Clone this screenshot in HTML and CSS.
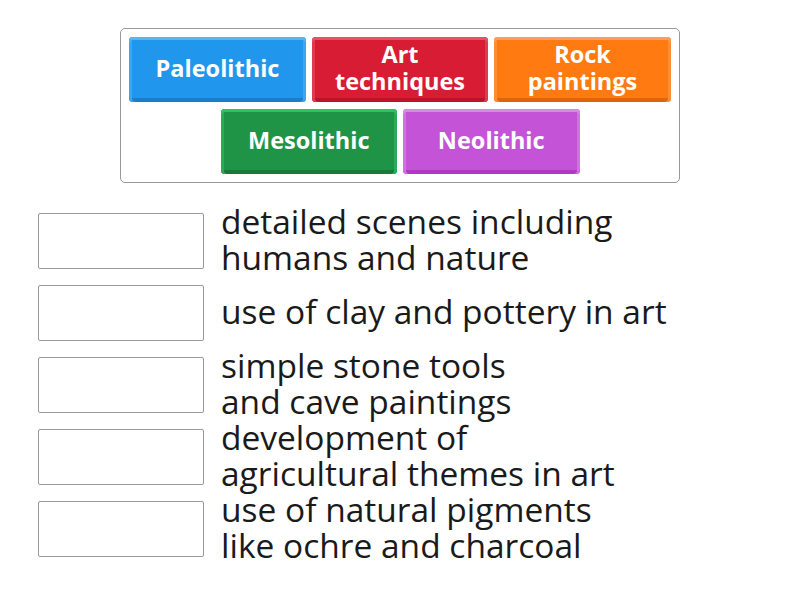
FILE: index.html
```html
<!DOCTYPE html>
<html lang="en">
<head>
  <meta charset="UTF-8" />
  <title>Match up - Prehistoric art</title>
  <link rel="stylesheet" href="styles.css">
</head>
<body>
  <!-- answer tiles -->
  <div class="bank">
    <div class="tile blue">Paleolithic</div>
    <div class="tile red">Art techniques</div>
    <div class="tile orange">Rock paintings</div>
    <div class="tile green">Mesolithic</div>
    <div class="tile purple">Neolithic</div>
  </div>

  <!-- drop targets -->
  <div class="rows">
    <div class="row">
      <div class="slot"></div>
      <div class="clue">detailed scenes including<br>humans and nature</div>
    </div>
    <div class="row">
      <div class="slot"></div>
      <div class="clue">use of clay and pottery in art</div>
    </div>
    <div class="row">
      <div class="slot"></div>
      <div class="clue">simple stone tools<br>and cave paintings</div>
    </div>
    <div class="row">
      <div class="slot"></div>
      <div class="clue">development of<br>agricultural themes in art</div>
    </div>
    <div class="row">
      <div class="slot"></div>
      <div class="clue">use of natural pigments<br>like ochre and charcoal</div>
    </div>
  </div>
</body>
</html>
```

FILE: styles.css
```css
body {
  font-family: "Open Sans", "Liberation Sans", sans-serif;
  background: white;
  margin: 0;
  padding: 28px 0 0;
  color: #1a1a1a;
}
.bank {
  width: 542px;
  margin: 0 auto;
  padding: 8px 8px;
  border: 1px solid #999;
  border-radius: 5px;
  display: flex;
  flex-wrap: wrap;
  justify-content: center;
  gap: 7px 6px;
}
.tile {
  width: 176.5px;
  height: 65px;
  box-sizing: border-box;
  padding: 0 14px 3px;
  border-radius: 4px;
  display: flex;
  align-items: center;
  justify-content: center;
  text-align: center;
  color: white;
  font-weight: bold;
  font-size: 23.5px;
  line-height: 27px;
}
.blue {
  background: #2096ec;
  box-shadow: inset 0 3px #58b5f3, inset 3px 0 #3ca6ef, inset -3px 0 #3ca6ef, inset 0 -4px #167fce;
}
.red {
  background: #d81c34;
  box-shadow: inset 0 3px #e45467, inset 3px 0 #df3a4f, inset -3px 0 #df3a4f, inset 0 -4px #b8152a;
}
.orange {
  background: #ff7a10;
  box-shadow: inset 0 3px #ffa05a, inset 3px 0 #ff8d35, inset -3px 0 #ff8d35, inset 0 -4px #e0650a;
}
.green {
  background: #1f9346;
  box-shadow: inset 0 3px #32c064, inset 3px 0 #2aab57, inset -3px 0 #2aab57, inset 0 -4px #177a39;
}
.purple {
  background: #c553d8;
  box-shadow: inset 0 3px #d98ae6, inset 3px 0 #d072df, inset -3px 0 #d072df, inset 0 -4px #b336c8;
}
.rows {
  margin-top: 22px;
  padding-left: 38px;
}
.row {
  height: 72px;
  display: flex;
  align-items: center;
}
.slot {
  width: 166px;
  height: 56px;
  box-sizing: border-box;
  border: 1px solid #999;
  border-radius: 2px;
  flex-shrink: 0;
}
.clue {
  margin-left: 17px;
  padding-bottom: 5px;
  font-size: 33.5px;
  line-height: 36px;
  white-space: nowrap;
}
```
